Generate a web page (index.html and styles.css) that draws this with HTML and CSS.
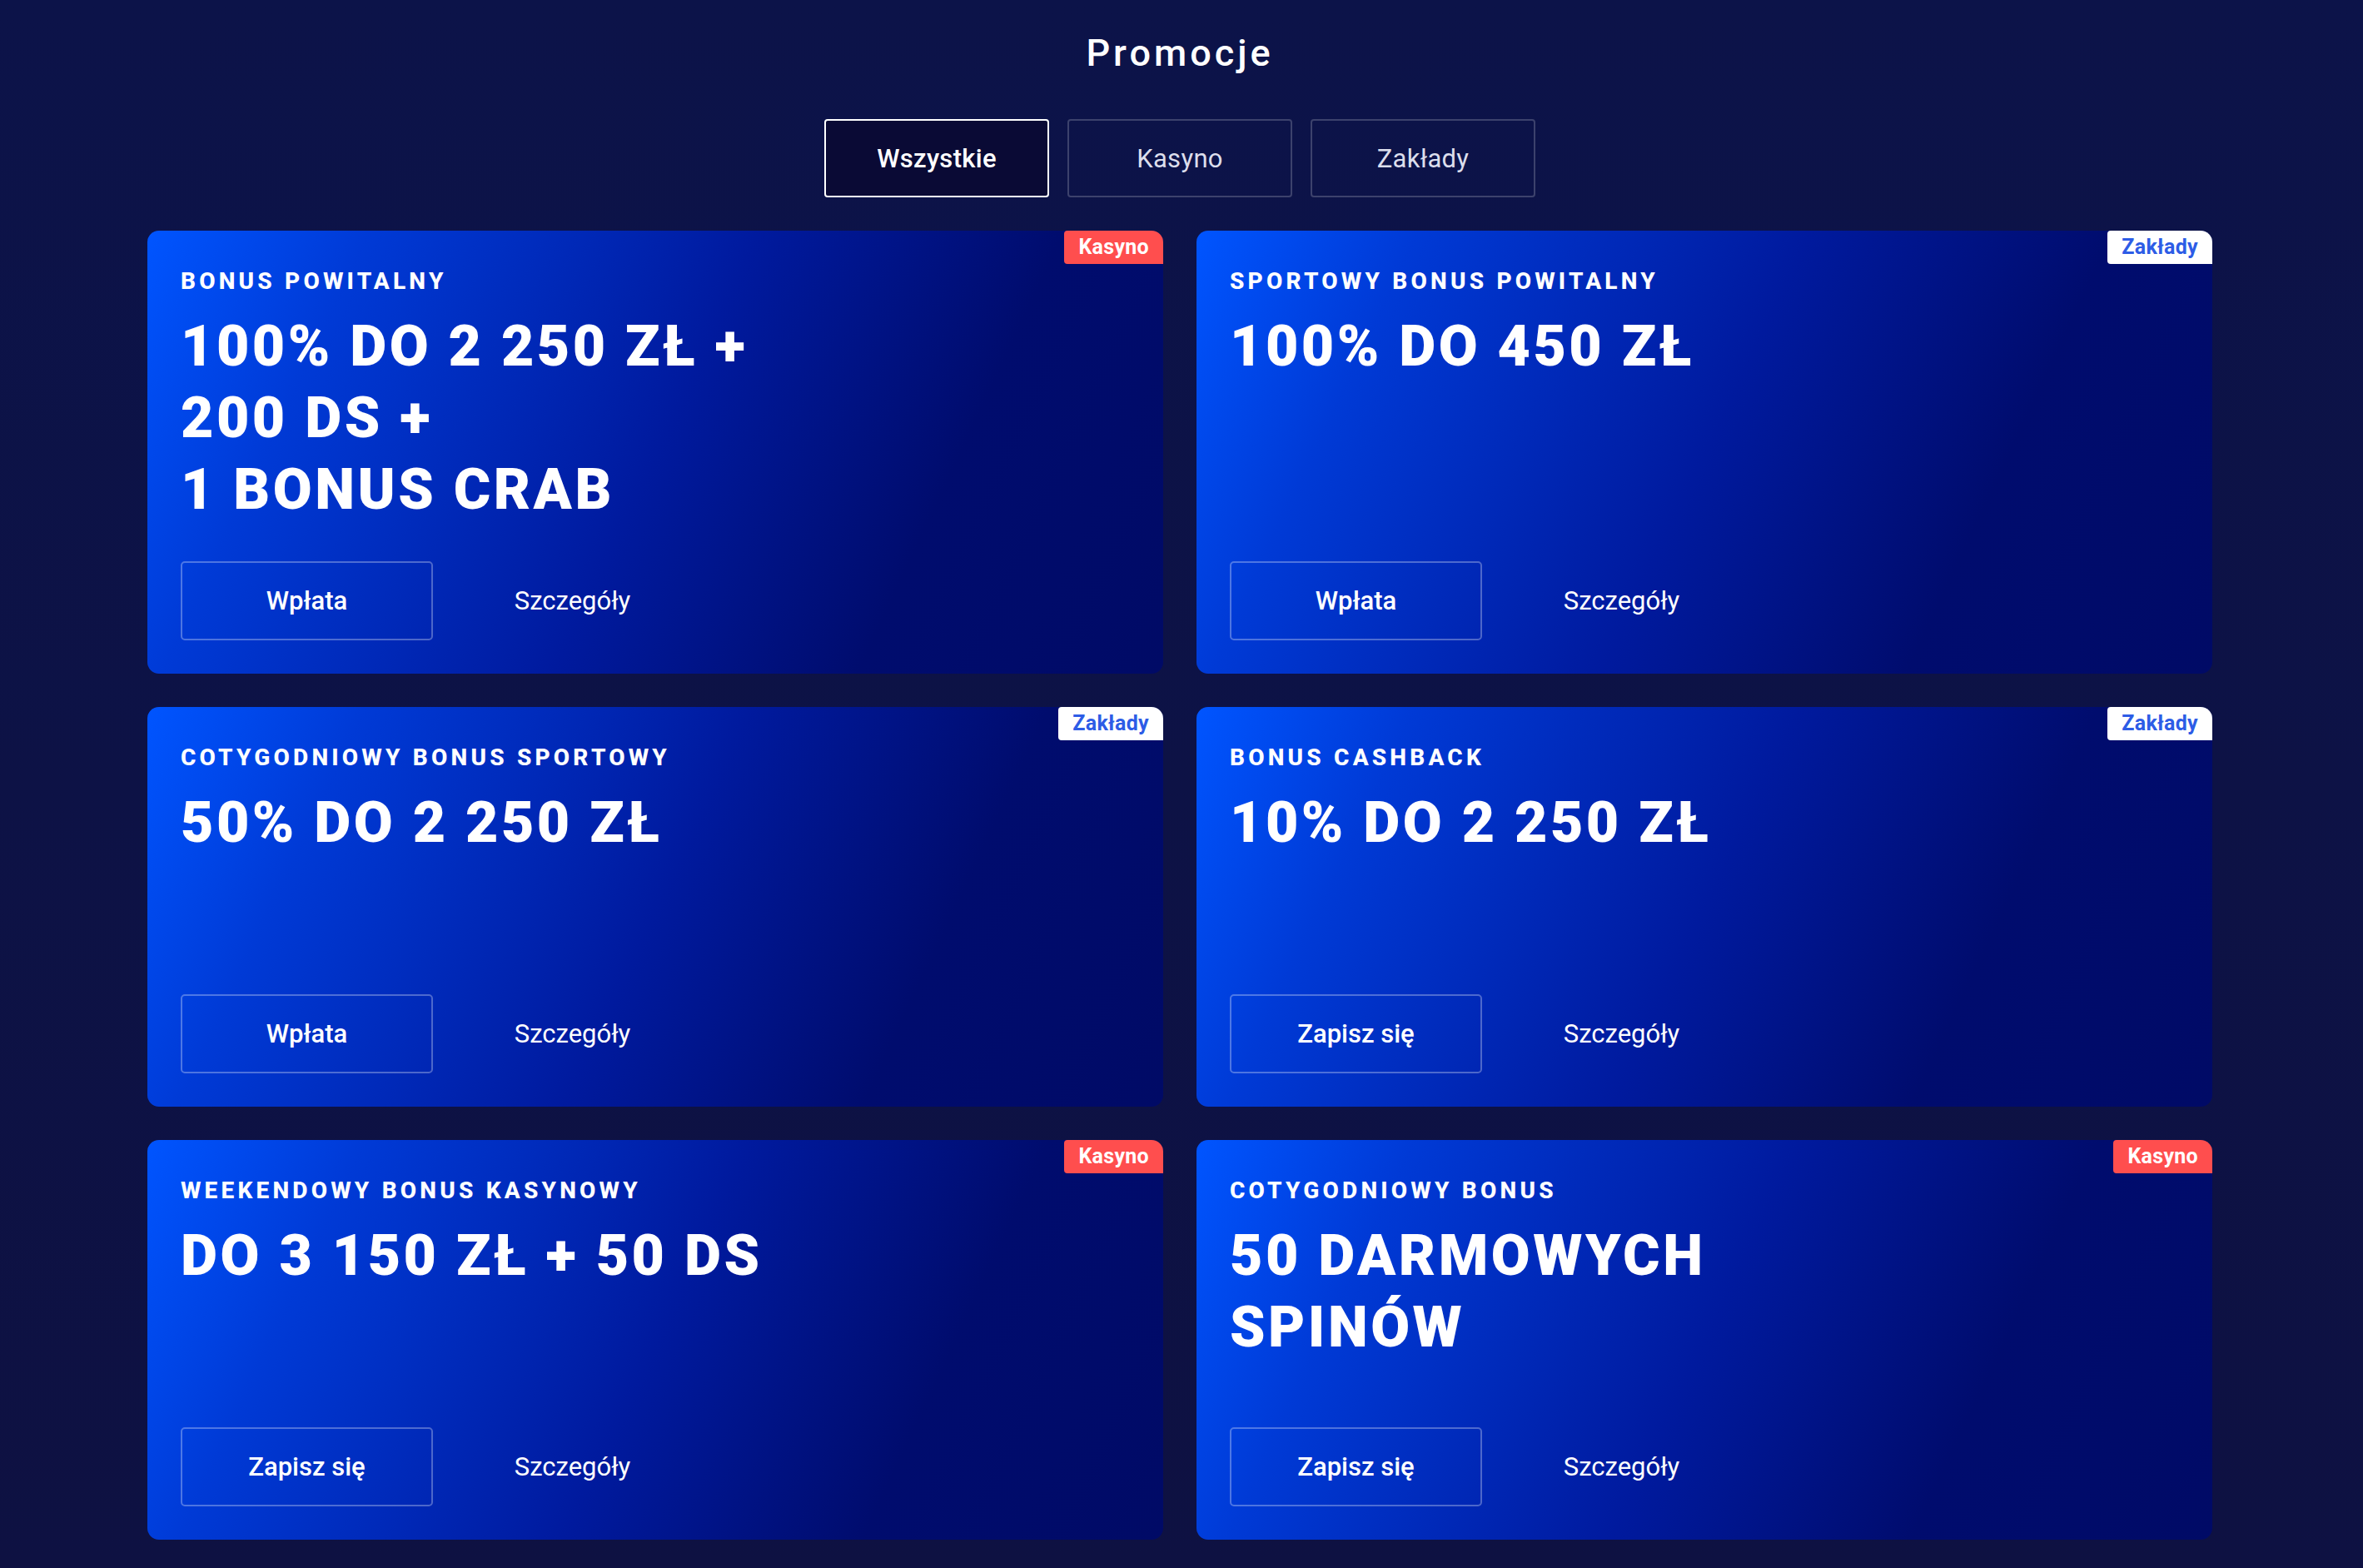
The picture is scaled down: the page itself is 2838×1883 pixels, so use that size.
FILE: index.html
```html
<!DOCTYPE html>
<html lang="pl">
<head>
<meta charset="utf-8">
<title>Promocje</title>
<link rel="stylesheet" href="styles.css">
</head>
<body>
<main class="page">
  <h1 class="page-title">Promocje</h1>

  <nav class="tabs">
    <button class="tab tab--active">Wszystkie</button>
    <button class="tab">Kasyno</button>
    <button class="tab">Zakłady</button>
  </nav>

  <section class="promo-grid">
    <article class="promo">
      <span class="badge badge--casino">Kasyno</span>
      <div class="promo-label">BONUS POWITALNY</div>
      <h2 class="promo-title">100% DO 2 250 ZŁ +<br>200 DS +<br>1 BONUS CRAB</h2>
      <div class="promo-actions">
        <button class="btn btn--outline">Wpłata</button>
        <button class="btn btn--link">Szczegóły</button>
      </div>
    </article>

    <article class="promo">
      <span class="badge badge--sport">Zakłady</span>
      <div class="promo-label">SPORTOWY BONUS POWITALNY</div>
      <h2 class="promo-title">100% DO 450 ZŁ</h2>
      <div class="promo-actions">
        <button class="btn btn--outline">Wpłata</button>
        <button class="btn btn--link">Szczegóły</button>
      </div>
    </article>

    <article class="promo">
      <span class="badge badge--sport">Zakłady</span>
      <div class="promo-label">COTYGODNIOWY BONUS SPORTOWY</div>
      <h2 class="promo-title">50% DO 2 250 ZŁ</h2>
      <div class="promo-actions">
        <button class="btn btn--outline">Wpłata</button>
        <button class="btn btn--link">Szczegóły</button>
      </div>
    </article>

    <article class="promo">
      <span class="badge badge--sport">Zakłady</span>
      <div class="promo-label">BONUS CASHBACK</div>
      <h2 class="promo-title">10% DO 2 250 ZŁ</h2>
      <div class="promo-actions">
        <button class="btn btn--outline">Zapisz się</button>
        <button class="btn btn--link">Szczegóły</button>
      </div>
    </article>

    <article class="promo">
      <span class="badge badge--casino">Kasyno</span>
      <div class="promo-label">WEEKENDOWY BONUS KASYNOWY</div>
      <h2 class="promo-title">DO 3 150 ZŁ + 50 DS</h2>
      <div class="promo-actions">
        <button class="btn btn--outline">Zapisz się</button>
        <button class="btn btn--link">Szczegóły</button>
      </div>
    </article>

    <article class="promo">
      <span class="badge badge--casino">Kasyno</span>
      <div class="promo-label">COTYGODNIOWY BONUS</div>
      <h2 class="promo-title">50 DARMOWYCH<br>SPINÓW</h2>
      <div class="promo-actions">
        <button class="btn btn--outline">Zapisz się</button>
        <button class="btn btn--link">Szczegóły</button>
      </div>
    </article>
  </section>
</main>
</body>
</html>
```

FILE: styles.css
```css
* {
  box-sizing: border-box;
}

html,
body {
  margin: 0;
  min-height: 100%;
}

body {
  background: linear-gradient(180deg, #0c1349 0%, #0e1142 100%);
  color: #ffffff;
  font-family: Roboto, "Noto Sans", "Liberation Sans", sans-serif;
}

.page {
  max-width: 2484px;
  margin: 0 auto;
  padding: 37px 4px 40px 0;
}

.page-title {
  margin: 0;
  font-size: 45px;
  line-height: 53px;
  font-weight: 500;
  letter-spacing: 4px;
  text-align: center;
}

/* filter tabs */
.tabs {
  display: flex;
  justify-content: center;
  gap: 22px;
  margin-top: 53px;
}

.tab {
  width: 270px;
  height: 94px;
  border: 2px solid rgba(255, 255, 255, 0.2);
  border-radius: 4px;
  background: transparent;
  color: #dcdeec;
  font-family: inherit;
  font-size: 31px;
  font-weight: 400;
  letter-spacing: 0.3px;
  cursor: pointer;
}

.tab--active {
  border-color: #ffffff;
  background: #0a0a35;
  color: #ffffff;
  font-weight: 500;
}

/* promotion cards */
.promo-grid {
  display: grid;
  grid-template-columns: 1fr 1fr;
  gap: 40px;
  margin-top: 40px;
}

.promo {
  position: relative;
  display: flex;
  flex-direction: column;
  min-height: 480px;
  padding: 40px;
  border-radius: 14px;
  background: linear-gradient(115deg, #0055ff 0%, #003ad6 18%, #001a9e 50%, #000c6e 75%, #000a66 100%);
}

.badge {
  position: absolute;
  top: 0;
  right: 0;
  height: 40px;
  padding: 0 17px;
  border-radius: 4px 14px 0 4px;
  font-size: 25px;
  line-height: 40px;
  font-weight: 700;
  letter-spacing: 0.3px;
}

.badge--casino {
  background: #ff4e4e;
  color: #ffffff;
}

.badge--sport {
  background: #ffffff;
  color: #2d5ce6;
}

.promo-label {
  font-size: 28px;
  line-height: 42px;
  font-weight: 800;
  letter-spacing: 4.2px;
}

.promo-title {
  margin: 14px 0 43px;
  font-size: 68px;
  line-height: 86px;
  font-weight: 900;
  letter-spacing: 3.5px;
}

.promo-actions {
  display: flex;
  gap: 16px;
  margin-top: auto;
}

.btn {
  width: 303px;
  height: 95px;
  border-radius: 5px;
  background: transparent;
  color: #ffffff;
  font-family: inherit;
  font-size: 31px;
  cursor: pointer;
}

.btn--outline {
  border: 2px solid rgba(255, 255, 255, 0.3);
  font-weight: 500;
}

.btn--link {
  border: 0;
  font-weight: 400;
}
```
